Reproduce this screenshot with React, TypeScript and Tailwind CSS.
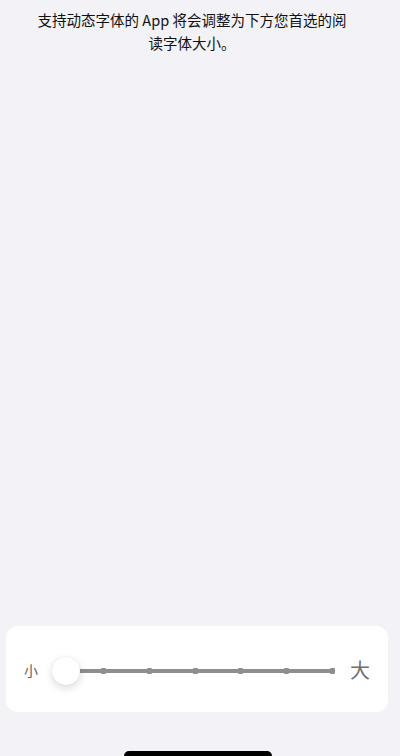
// stop positions along the track, relative to its left end
const ticks = [46, 92, 138, 183, 229, 275]

function FontSizeSlider() {
  return (
    <div className="flex h-[86px] items-center rounded-[12px] bg-white">
      <span className="w-[51px] pl-[18px] pt-[2px] text-[14px] text-[#5f5f5f]">小</span>
      <div className="relative mt-[4px] h-[28px] w-[278px]">
        {/* track */}
        <div className="absolute left-0 right-[2px] top-[12px] h-[4px] bg-[#8e8e8e]" />
        {ticks.map((x) => (
          <div
            key={x}
            className="absolute top-[11px] h-[6px] w-[5px] rounded-[1px] bg-[#8e8e8e]"
            style={{ left: x - 2 }}
          />
        ))}
        {/* thumb */}
        <div className="absolute left-[-5px] top-0 h-[28px] w-[28px] rounded-full bg-white shadow-[0_3px_8px_rgba(0,0,0,0.15),0_0_1px_rgba(0,0,0,0.12)]" />
      </div>
      <span className="ml-[15px] pt-[2px] text-[20px] text-[#6e6e6e]">大</span>
    </div>
  )
}

export default function App() {
  return (
    <div
      className="flex h-[756px] w-[400px] flex-col bg-[#f2f2f7]"
      style={{ fontFamily: '"Noto Sans CJK SC", "Noto Sans", sans-serif' }}
    >
      <p className="pr-[16px] pt-[8px] text-center text-[14.5px] leading-[23px] text-[#111111]">
        支持动态字体的 App 将会调整为下方您首选的阅
        <br />
        读字体大小。
      </p>
      <div className="flex-1" />
      <div className="pl-[6px] pr-[12px]">
        <FontSizeSlider />
      </div>
      <div className="flex h-[44px] items-end justify-center pr-[4px]">
        <div className="h-[5px] w-[148px] rounded-t-full bg-black" />
      </div>
    </div>
  )
}
